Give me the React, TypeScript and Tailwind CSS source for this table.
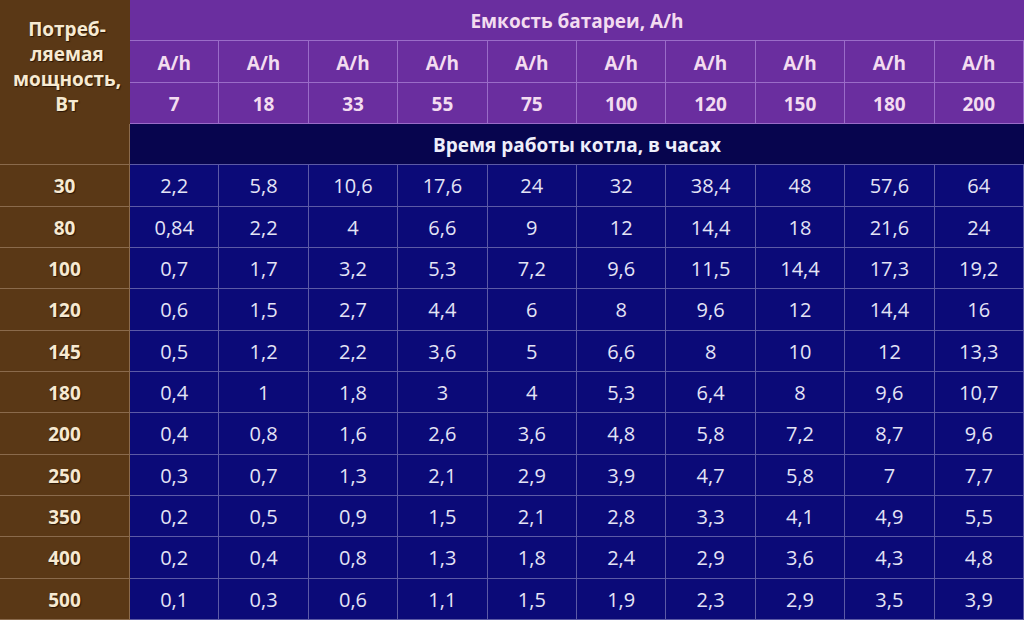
import React from "react";

const caps = ["7", "18", "33", "55", "75", "100", "120", "150", "180", "200"];
const rows: [string, string[]][] = [
  ["30", ["2,2", "5,8", "10,6", "17,6", "24", "32", "38,4", "48", "57,6", "64"]],
  ["80", ["0,84", "2,2", "4", "6,6", "9", "12", "14,4", "18", "21,6", "24"]],
  ["100", ["0,7", "1,7", "3,2", "5,3", "7,2", "9,6", "11,5", "14,4", "17,3", "19,2"]],
  ["120", ["0,6", "1,5", "2,7", "4,4", "6", "8", "9,6", "12", "14,4", "16"]],
  ["145", ["0,5", "1,2", "2,2", "3,6", "5", "6,6", "8", "10", "12", "13,3"]],
  ["180", ["0,4", "1", "1,8", "3", "4", "5,3", "6,4", "8", "9,6", "10,7"]],
  ["200", ["0,4", "0,8", "1,6", "2,6", "3,6", "4,8", "5,8", "7,2", "8,7", "9,6"]],
  ["250", ["0,3", "0,7", "1,3", "2,1", "2,9", "3,9", "4,7", "5,8", "7", "7,7"]],
  ["350", ["0,2", "0,5", "0,9", "1,5", "2,1", "2,8", "3,3", "4,1", "4,9", "5,5"]],
  ["400", ["0,2", "0,4", "0,8", "1,3", "1,8", "2,4", "2,9", "3,6", "4,3", "4,8"]],
  ["500", ["0,1", "0,3", "0,6", "1,1", "1,5", "1,9", "2,3", "2,9", "3,5", "3,9"]],
];

export default function App() {
  return (
    <div
      className="w-[1024px] h-[620px] overflow-hidden grid grid-cols-[130px_repeat(10,1fr)] grid-rows-[repeat(15,1fr)] bg-[#0b0a78]"
      style={{ fontFamily: '"Open Sans", "Noto Sans", sans-serif' }}
    >
      <div className="row-span-3 bg-[#5a3816] flex items-center justify-center text-center font-bold text-[19px] leading-[25px] text-[#f7ead2] [text-shadow:1px_1px_1px_#2a1606] pt-[10px] pl-[4px]">
        <div>
          Потреб-
          <br />
          ляемая
          <br />
          мощность,
          <br />
          Вт
        </div>
      </div>
      <div className="col-span-10 bg-[#6a2e9f] border-b border-[#9a6cc8] flex items-center justify-center font-bold text-[19px] text-[#f3dcf0] pt-[2px]">
        Емкость батареи, A/h
      </div>
      {caps.map((c, i) => (
        <div
          key={"a" + i}
          className="bg-[#6a2e9f] border-b border-r border-[#9a6cc8] flex items-center justify-center font-bold text-[19px] text-[#f3dcf0] pt-[3px]"
        >
          A/h
        </div>
      ))}
      {caps.map((c, i) => (
        <div
          key={"c" + i}
          className="bg-[#6a2e9f] border-b border-r border-[#9a6cc8] flex items-center justify-center font-bold text-[19px] text-[#f3dcf0] pt-[2px]"
        >
          {c}
        </div>
      ))}
      <div className="bg-[#5a3816] border-b border-r border-[#8a6a4c]" />
      <div className="col-span-10 bg-[#07054e] border-b border-[#5c5aa6] flex items-center justify-center font-bold text-[19px] text-[#eeeefa] pt-[2px]">
        Время работы котла, в часах
      </div>
      {rows.map(([w, vals]) => (
        <React.Fragment key={w}>
          <div className="bg-[#5a3816] border-b border-r border-[#8a6a4c] flex items-center justify-center font-bold text-[19px] text-[#f7ead2] [text-shadow:1px_1px_1px_#2a1606] pt-[2px]">
            {w}
          </div>
          {vals.map((v, i) => (
            <div
              key={i}
              className="bg-[#0b0a78] border-b border-r border-[#5c5aa6] flex items-center justify-center font-medium text-[20px] text-[#e4e4f6] pt-[2px]"
            >
              {v}
            </div>
          ))}
        </React.Fragment>
      ))}
    </div>
  );
}
